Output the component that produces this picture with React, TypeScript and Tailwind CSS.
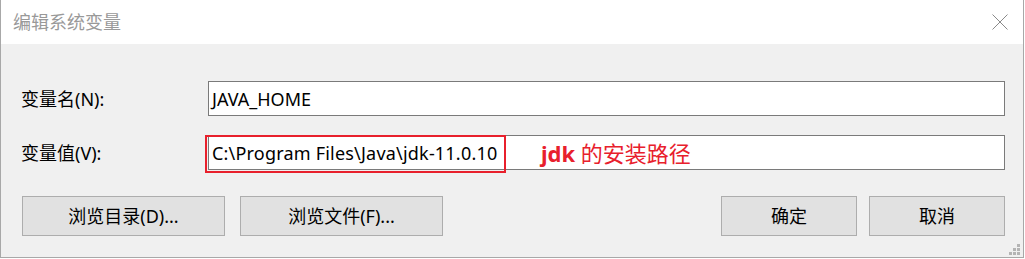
import React from "react";

const font = "font-['Noto_Sans','Noto_Sans_CJK_SC',sans-serif]";

function WinButton({ label, className }: { label: string; className: string }) {
	return (
		<button
			type="button"
			className={`h-[40px] bg-[#e1e1e1] border border-[#adadad] text-[18px] text-black leading-none flex items-center justify-center ${className}`}
		>
			{label}
		</button>
	);
}

export default function App() {
	return (
		<div className={`w-[1025px] h-[259px] bg-white ${font}`}>
			<div className="w-[1024px] h-[258px] border-l border-r border-b border-[#a8a8a8] flex flex-col relative">
				{/* title bar */}
				<div className="h-[44px] bg-white flex items-center justify-between pl-[12px] pr-[15px] shrink-0">
					<span className="text-[18px] text-[#999999] leading-none">编辑系统变量</span>
					<svg width="16" height="16" viewBox="0 0 16 16">
						<path d="M0.5 0.5 L15.5 15.5 M15.5 0.5 L0.5 15.5" stroke="#8a8a8a" strokeWidth="1" fill="none" />
					</svg>
				</div>

				{/* body */}
				<div className="flex-1 bg-[#f0f0f0] pt-[37px] pl-[20px] pr-[18px] flex flex-col">
					<div className="flex items-center h-[35px]">
						<label className="w-[187px] text-[18px] text-black leading-none">变量名(N):</label>
						<div className="flex-1 h-[35px] bg-white border border-[#7a7a7a] flex items-center pl-[3px] text-[18px] leading-none">
							JAVA_HOME
						</div>
					</div>

					<div className="flex items-center h-[35px] mt-[19px]">
						<label className="w-[187px] text-[18px] text-black leading-none">变量值(V):</label>
						<div className="flex-1 h-[35px] bg-white border border-[#7a7a7a] flex items-center pl-[3px] text-[18px] tracking-[0.2px] leading-none relative">
							C:\Program Files\Java\jdk-11.0.10
							{/* red highlight drawn over the field */}
							<div className="absolute left-[-4px] top-[-1px] w-[301px] h-[38px] border-2 border-[#e8202c]"></div>
							<span className="absolute left-[332px] top-[6px] text-[22px] tracking-normal text-[#e8202c] leading-none">
								<b className="font-bold">jdk</b> 的安装路径
							</span>
						</div>
					</div>

					<div className="flex items-center mt-[26px]">
						<WinButton label="浏览目录(D)..." className="w-[203px] ml-[1px]" />
						<WinButton label="浏览文件(F)..." className="w-[203px] ml-[15px]" />
						<div className="flex-1"></div>
						<WinButton label="确定" className="w-[136px]" />
						<WinButton label="取消" className="w-[136px] ml-[12px]" />
					</div>
				</div>

				{/* resize grip */}
				<svg width="12" height="12" viewBox="0 0 12 12" className="absolute right-[2px] bottom-[1px]">
					<rect x="8" y="0" width="3" height="3" fill="#b4b4b4" />
					<rect x="4" y="4" width="3" height="3" fill="#b4b4b4" />
					<rect x="8" y="4" width="3" height="3" fill="#b4b4b4" />
					<rect x="0" y="8" width="3" height="3" fill="#b4b4b4" />
					<rect x="4" y="8" width="3" height="3" fill="#b4b4b4" />
					<rect x="8" y="8" width="3" height="3" fill="#b4b4b4" />
				</svg>
			</div>
		</div>
	);
}
